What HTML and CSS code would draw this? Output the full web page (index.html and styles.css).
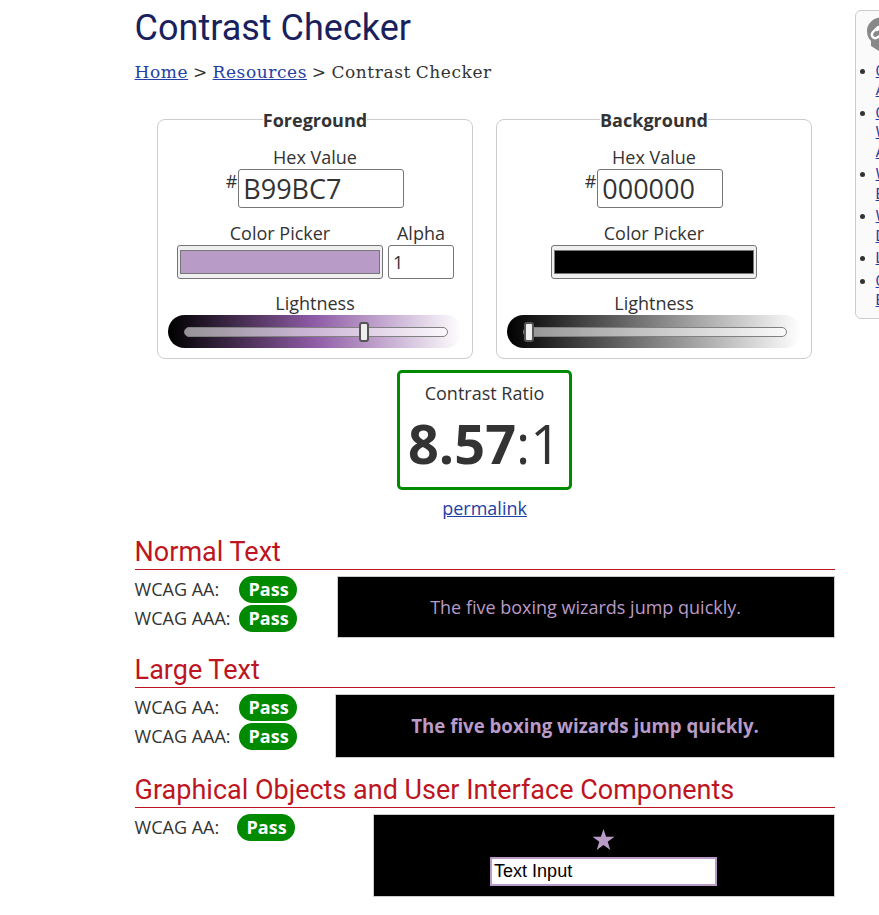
FILE: index.html
```html
<!DOCTYPE html>
<html lang="en">
<head>
<meta charset="utf-8">
<title>Contrast Checker</title>
<link rel="stylesheet" href="styles.css">
</head>
<body>
<div class="page">
<main class="content">
  <h1>Contrast Checker</h1>
  <nav class="crumbs"><a href="#">Home</a> &gt; <a href="#">Resources</a> &gt; Contrast Checker</nav>
  <div class="pickers">
    <section class="panel">
      <h2 class="legend"><span>Foreground</span></h2>
      <div class="label hex-label">Hex Value</div>
      <div class="hex-row"><span class="hash">#</span><div class="field hex fg-hex">B99BC7</div></div>
      <div class="picker-row with-alpha">
        <div><div class="label">Color Picker</div><div class="swatch"><div class="swatch-fill fg"></div></div></div>
        <div><div class="label">Alpha</div><div class="field alpha">1</div></div>
      </div>
      <div class="label light-label">Lightness</div>
      <div class="slider fg-slider"><div class="track"><div class="thumb fg-thumb"></div></div></div>
    </section>
    <section class="panel">
      <h2 class="legend"><span>Background</span></h2>
      <div class="label hex-label">Hex Value</div>
      <div class="hex-row"><span class="hash">#</span><div class="field hex bg-hex">000000</div></div>
      <div class="picker-row">
        <div><div class="label">Color Picker</div><div class="swatch"><div class="swatch-fill bg"></div></div></div>
      </div>
      <div class="label light-label">Lightness</div>
      <div class="slider bg-slider"><div class="track"><div class="thumb bg-thumb"></div></div></div>
    </section>
  </div>
  <div class="ratio-box">
    <div class="ratio-label">Contrast Ratio</div>
    <div class="ratio"><b>8.57</b>:1</div>
  </div>
  <div class="permalink"><a href="#">permalink</a></div>

  <h2 class="section-title">Normal Text</h2>
  <div class="result">
    <div class="grades">
      <div class="grade"><span class="grade-name">WCAG AA:</span><b class="pass">Pass</b></div>
      <div class="grade"><span class="grade-name">WCAG AAA:</span><b class="pass">Pass</b></div>
    </div>
    <div class="sample normal">The five boxing wizards jump quickly.</div>
  </div>
  <h2 class="section-title large-title">Large Text</h2>
  <div class="result large-result">
    <div class="grades">
      <div class="grade"><span class="grade-name">WCAG AA:</span><b class="pass">Pass</b></div>
      <div class="grade"><span class="grade-name">WCAG AAA:</span><b class="pass">Pass</b></div>
    </div>
    <div class="sample large">The five boxing wizards jump quickly.</div>
  </div>
  <h2 class="section-title ui-title">Graphical Objects and User Interface Components</h2>
  <div class="result ui-result">
    <div class="grades">
      <div class="grade"><span class="grade-name short">WCAG AA:</span><b class="pass">Pass</b></div>
    </div>
    <div class="sample ui">
      <svg class="star" width="23" height="22" viewBox="0 0 22 22"><path d="M11 0l2.6 7.8H22l-6.8 4.9 2.6 8.3L11 16.1 4.2 21l2.6-8.3L0 7.8h8.4z"/></svg>
      <div class="text-input">Text Input</div>
    </div>
  </div>
</main>
<aside class="related">
  <svg class="badge-icon" width="44" height="44" viewBox="0 0 44 44"><path fill="#888" d="M17 0C7 0 0 6 0 14c0 5 2 8 4 10v5l18 11 18-11v-5c2-3 4-5 4-10C44 6 37 0 27 0z"/><g fill="none" stroke="#fff" stroke-width="2.4" stroke-linecap="round"><path d="M11 10L6 15c-3 4 1 8 5 5l8-5c3-3 0-8-4-6l-5 4"/></g></svg>
  <ul>
    <li><a href="#">Contrast and Color<br>Accessibility</a></li>
    <li><a href="#">Contrast and<br>WCAG Color<br>Accessibility</a></li>
    <li><a href="#">WAVE Browser<br>Extensions</a></li>
    <li><a href="#">Web Accessible<br>Design</a></li>
    <li><a href="#">Link Contrast</a></li>
    <li><a href="#">Contrast<br>Evaluation</a></li>
  </ul>
</aside>
</div>
</body>
</html>
```
FILE: styles.css
```css
* { box-sizing: border-box; }
html { overflow: hidden; }
body { margin: 0; background: #fff; color: #333; font: 18px/25px "Open Sans", sans-serif; overflow: hidden; }
a { color: #2440a4; }
h1, h2 { margin: 0; }
.page { display: flex; align-items: flex-start; width: 100%; height: 915px; padding-left: 134.6px; overflow: hidden; }
.content { width: 700px; flex: none; }
h1 { font: 400 36px/44px Roboto, sans-serif; color: #1a1f5e; margin-top: 6px; }
.crumbs { font: 17px/24px "DejaVu Serif", serif; letter-spacing: .58px; word-spacing: -1.2px; margin-top: 10px; white-space: nowrap; }
.pickers { display: flex; gap: 23px; padding-left: 22.4px; margin-top: 35px; }
.panel { width: 316px; height: 240px; border: 1px solid #ccc; border-radius: 8px; }
.legend { font: 700 18px/24px "Open Sans", sans-serif; text-align: center; margin-top: -12px; padding-left: 0; }
.legend span { background: #fff; }
.label { text-align: center; line-height: 24px; }
.hex-label { margin-top: 13px; }
.hex-row { display: flex; justify-content: center; }
.hash { line-height: 24px; }
.field { border: 1px solid #767676; border-radius: 3px; background: #fff; }
.hex { height: 39px; font-size: 27px; line-height: 38px; padding-left: 4px; margin-left: 1px; }
.fg-hex { width: 166px; }
.bg-hex { width: 126px; }
.picker-row { display: flex; justify-content: center; gap: 5px; margin-top: 13px; }
.with-alpha { padding-left: 1px; }
.swatch { width: 206px; height: 34px; border: 1px solid #767676; border-radius: 3px; background: #efefef; padding: 4px 2px; }
.swatch-fill { height: 24px; border: 1px solid #777; }
.fg { background: #b99bc7; }
.bg { background: #000; }
.alpha { width: 66px; height: 34px; padding-left: 4px; line-height: 33px; }
.light-label { margin-top: 12px; }
.slider { width: 294px; height: 33px; margin-left: 10px; border-radius: 17px; padding: 12px 14px 0 16px; }
.fg-slider { background: linear-gradient(to right, #000, #8f5ca6, #fff); }
.bg-slider { background: linear-gradient(to right, #000, #808080, #fff); }
.track { width: 264px; height: 10px; border: 1px solid #808080; border-radius: 5px; background: rgba(255,255,255,.56); }
.thumb { width: 10px; height: 20px; margin-top: -6px; border: 2px solid #555; border-radius: 3px; background: #efefef; }
.fg-thumb { margin-left: 174px; }
.bg-thumb { margin-left: 0; }
.ratio-box { width: 175px; height: 120px; margin: 11px 0 0 262.4px; border: 3px solid #008a00; border-radius: 5px; }
.ratio-label { text-align: center; margin-top: 8px; }
.ratio { font-size: 54px; line-height: 74px; padding-left: 8px; white-space: nowrap; }
.permalink { text-align: center; margin-top: 6px; }
.section-title { font: 400 27px/34px Roboto, sans-serif; color: #bd1622; border-bottom: 1px solid #bd1622; height: 35px; margin-top: 14px; white-space: nowrap; }
.result { display: flex; justify-content: space-between; margin-top: 6px; height: 62px; }
.grade { display: flex; height: 27px; margin-bottom: 2px; line-height: 27px; }
.grade-name { width: 104px; }
.short { width: 102px; }
.pass { width: 58px; border-radius: 14px; background: #008a00; color: #fff; text-align: center; padding-left: 2px; }
.sample { border: 1px solid #ccc; background: #000; color: #b99bc7; text-align: center; }
.normal { width: 498px; line-height: 61px; }
.large-title { margin-top: 15px; }
.large-result { height: 64px; }
.large { width: 500px; line-height: 62px; font-weight: 700; font-size: 18.67px; padding-left: 1px; }
.ui-title { margin-top: 15px; }
.ui-result { height: 83px; }
.ui { width: 462px; display: flex; flex-direction: column; align-items: center; padding: 14px 1px 0 0; }
.star { fill: #b99bc7; }
.text-input { width: 227px; height: 29px; margin-top: 6px; border: 2px solid #b99bc7; background: #fff; color: #000; font: 18px/25px "Liberation Sans", sans-serif; text-align: left; padding-left: 2.5px; }
.related { width: 220px; flex: none; height: 309px; margin: 10px 0 0 20px; border: 1px solid #ccc; border-radius: 6px; background: #fafafa; font: 15px/19.5px Roboto, sans-serif; white-space: nowrap; }
.badge-icon { display: block; margin: 6px 0 0 11px; }
.related ul { margin: 0; padding: .5px 0 0 20px; }
.related li { margin-bottom: 3px; }
```
